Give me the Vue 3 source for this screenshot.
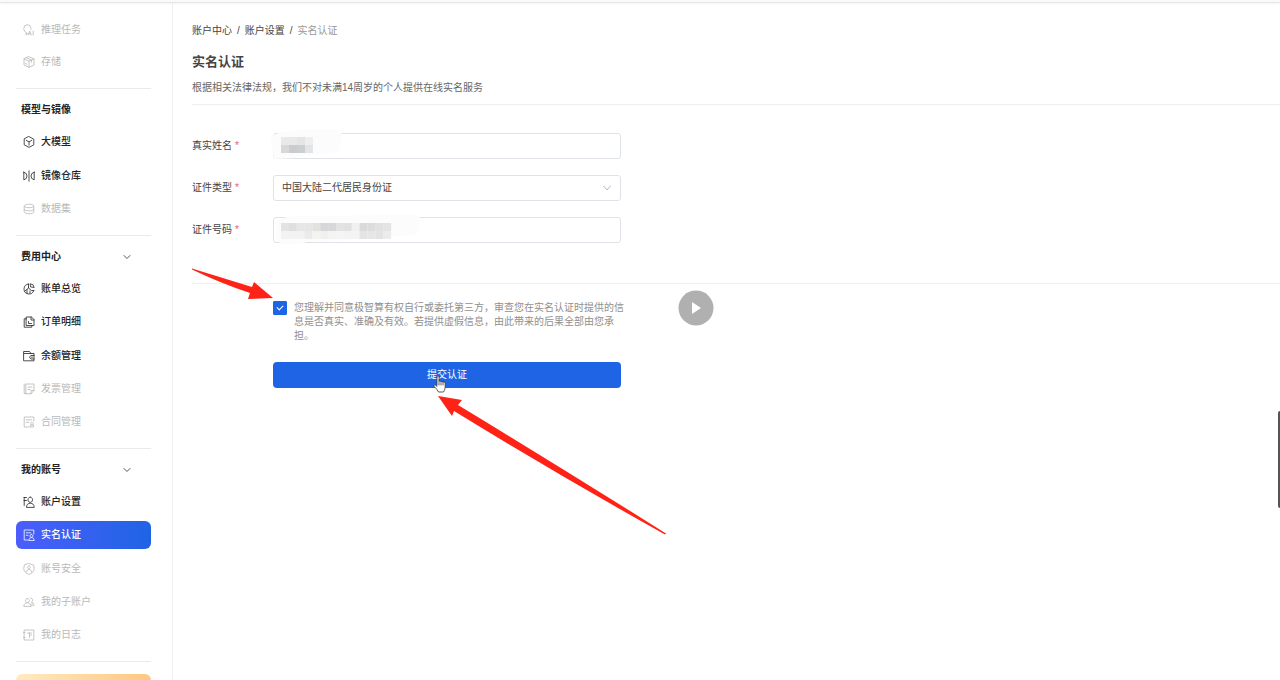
<script setup>
import { ref } from 'vue'

const icons = {
  infer: ['M4 9.200C1.600 8 .8 6.200 .8 4.600A3.500 3.700 0 0 1 7.900 4.400V5.300M3 9.200V11L4.400 9.700', 'M5.200 11L6.700 7L8.200 11M5.700 9.700H7.700M10.200 7V11'],
  store: ['M6 .7L11 3V9L6 11.300L1 9V3ZM1 3L6 5.200L11 3M6 5.200V11.300', 'M3.500 1.900L8.500 4.100V6.200M2.500 7.500L4 8.200'],
  cube: ['M6 .6L10.800 3.200V8.800L6 11.400L1.200 8.800V3.200ZM3.200 4.300L6 5.900L8.800 4.300M6 5.900V9.200'],
  mirror: ['M6 .8V11.200M.8 2.200V9.800Q4 9.200 4 6T.8 2.200ZM11.200 2.200V9.800Q8 9.200 8 6T11.200 2.200Z'],
  data: ['M1.200 3C1.200 .6 10.800 .6 10.800 3V9C10.800 11.400 1.200 11.400 1.200 9ZM1.200 3.500C2 5.200 10 5.200 10.800 3.500M1.200 6.500C2 8.500 10 8.500 10.800 6.500'],
  bill: ['M5.500 1A5 5 0 1 0 10.800 7.500M5.500 1V5L2 8M5.500 5L8.500 7.500H10.800', 'M7.500 .8A4 4 0 0 1 11.200 4.500L8 4ZM4 6.800V10.500M7 8V10'],
  order: ['M3.500 1H8.500L11 3.500V9.500H3.500ZM8 1V4H11M3.500 2.800H1.200V11.200H8.800V9.500M5.500 5.500V7.500H8.500'],
  wallet: ['M1 1.500H6.500L8 3.500H11V10.800H1ZM1 3.500H8', 'M11 5.500H7.800L6.500 7.200L7.800 9H11M8.500 7.200H9.500'],
  invoice: ['M3.200 1H11V7.500L8 10.800H3.200ZM1.200 1V10.500H3.200M5 4H9M5 6.500H7M8 10.800V7.500H11'],
  contract: ['M10.800 5V1H1.200V11H6M3.200 3.800H8.500M3.200 6.300H6', 'M9 6.200A1.300 1.300 0 1 1 8.900 6.200M8 9H10.500V11H7.500Z'],
  account: ['M3.500 1.500H1M3.500 4.500H1M1.200 1.500V9.500', 'M7.300 1A2.300 2.700 0 1 1 7.200 1M3.500 11C3.500 8.500 5 7.300 7.300 7.300S11.200 8.500 11.200 11Z'],
  verify: ['M10.800 5V1H1.200V11H5.500M3.200 3.800H7.500M3.200 6.300H5', 'M8.500 5.300A1.500 1.500 0 1 1 8.400 5.300M6 11.200C6 9.200 7.500 8.600 8.500 8.600S11.200 9.200 11.200 11.200Z'],
  safe: ['M6 .7L10.500 2L11.300 5.500C11 8.500 9 10.500 6 11.400C3 10.500 1 8.500 .7 5.500L1.500 2Z', 'M6 3A1.400 1.400 0 1 1 5.900 3M3.400 9C3.700 7.200 4.800 6.500 6 6.500S8.300 7.200 8.600 9'],
  users: ['M4.500 2.500A2 2 0 1 1 4.400 2.500M.8 10C1 7.600 2.500 6.800 4.500 6.800S7.800 7.700 8 10Z', 'M7.500 2A2 2 0 0 1 8.500 5.800C10 6.500 10.800 7.800 11 9.800M9 7V10'],
  log: ['M1.500 1H10.800V11H1.500ZM.5 3.500H2M.5 8.500H2M4.500 4H8.500M6.500 4V8.500M7.500 6H8.500'],
}

const sections = [
  { items: [{ t: '推理任务', i: 'infer', off: true }, { t: '存储', i: 'store', off: true }] },
  {
    title: '模型与镜像',
    items: [{ t: '大模型', i: 'cube' }, { t: '镜像仓库', i: 'mirror' }, { t: '数据集', i: 'data', off: true }],
  },
  {
    title: '费用中心',
    fold: true,
    items: [
      { t: '账单总览', i: 'bill' },
      { t: '订单明细', i: 'order' },
      { t: '余额管理', i: 'wallet' },
      { t: '发票管理', i: 'invoice', off: true },
      { t: '合同管理', i: 'contract', off: true },
    ],
  },
  {
    title: '我的账号',
    fold: true,
    items: [
      { t: '账户设置', i: 'account' },
      { t: '实名认证', i: 'verify', on: true },
      { t: '账号安全', i: 'safe', off: true },
      { t: '我的子账户', i: 'users', off: true },
      { t: '我的日志', i: 'log', off: true },
    ],
  },
]

const realName = ref('')
const idType = ref('中国大陆二代居民身份证')
const idNumber = ref('')
const agreed = ref(true)

const nameMosaic = ['#e9e9e9', '#e9e9e9', '#e5e5e5', '#eceeef', '#d8d8d8', '#cbcbcb', '#cccfd0', '#e3e4e6']
const numberMosaic = [
  '#e3e3e3', '#dfdfdf', '#e6e6e6', '#e6e6e6', '#e1e3df', '#d6d7d9', '#d8d8d8', '#e3e3e3', '#e1e1e1', '#f0f0f0', '#dadada', '#dcdcdc', '#e1e1df', '#e4e4e4',
  '#f3f3f3', '#f2f2f0', '#f2f2f2', '#ebebeb', '#f3f3f3', '#f0f1ef', '#f4f4f4', '#f5f5f3', '#f3f3f3', '#f4f4f4', '#e4e4e4', '#e6e6e6', '#e3e3e3', '#ececec',
]
</script>

<template>
  <div class="page">
    <header class="topbar"></header>
    <div class="body">
      <nav class="sidebar">
        <section v-for="(s, n) in sections" :key="n" class="group" :class="'rows-' + s.items.length">
          <h2 v-if="s.title" class="group-title">
            {{ s.title }}
            <svg v-if="s.fold" class="fold" viewBox="0 0 8 8"><path d="M1 2.500L4 5.500L7 2.500" /></svg>
          </h2>
          <ul class="menu">
            <li v-for="m in s.items" :key="m.t">
              <a href="#" class="item" :class="{ off: m.off, on: m.on }">
                <svg class="icon" viewBox="0 0 12 12"><path v-for="d in icons[m.i]" :key="d" :d="d" /></svg>
                {{ m.t }}
              </a>
            </li>
          </ul>
        </section>
        <div class="promo"></div>
      </nav>

      <main class="main">
        <div class="crumbs">
          <a href="#">账户中心</a><span>/</span><a href="#">账户设置</a><span>/</span><span class="here">实名认证</span>
        </div>
        <h1>实名认证</h1>
        <p class="note">根据相关法律法规，我们不对未满14周岁的个人提供在线实名服务</p>

        <form class="form" @submit.prevent>
          <div class="fields">
            <div class="field">
              <label for="name">真实姓名<i>*</i></label>
              <div class="control">
                <input id="name" v-model="realName" type="text" class="box" />
                <svg class="mask" viewBox="0 0 160 36">
                  <path class="smear" d="M1 8L12 3L30 1L64 0Q74 1 73 7L70 23L62 25Q34 25 26 29L5 30Z" />
                  <rect v-for="(c, k) in nameMosaic" :key="k" :x="12 + (k % 4) * 8" :y="k < 4 ? 8 : 16" width="8" height="8" :fill="c" />
                </svg>
              </div>
            </div>
            <div class="field">
              <label for="type">证件类型<i>*</i></label>
              <div class="control">
                <select id="type" v-model="idType" class="box">
                  <option>中国大陆二代居民身份证</option>
                </select>
                <svg class="caret" viewBox="0 0 8 8"><path d="M.5 2L4 6L7.500 2" /></svg>
              </div>
            </div>
            <div class="field">
              <label for="number">证件号码<i>*</i></label>
              <div class="control">
                <input id="number" v-model="idNumber" type="text" class="box" />
                <svg class="mask" viewBox="0 0 160 36">
                  <path class="smear" d="M8 7L22 3L144 2Q153 3 151 8L148 21L122 24Q70 28 38 29L30 31L12 31L7 26Z" />
                  <rect v-for="(c, k) in numberMosaic" :key="k" :x="12 + ((k % 14) * 110) / 14" :y="k < 14 ? 10 : 18" width="8" height="8" :fill="c" />
                </svg>
              </div>
            </div>
          </div>

          <div class="confirm">
            <div class="agree">
              <input id="agree" v-model="agreed" type="checkbox" />
              <label for="agree">您理解并同意极智算有权自行或委托第三方，审查您在实名认证时提供的信息是否真实、准确及有效。若提供虚假信息，由此带来的后果全部由您承担。</label>
            </div>
            <button type="submit" class="submit">提交认证</button>
          </div>
        </form>
      </main>
    </div>

    <button class="play" type="button" aria-label="播放">
      <svg viewBox="0 0 36 36"><circle cx="18" cy="18" r="17.500" /><path d="M14 12L23 18L14 24Z" /></svg>
    </button>
    <svg class="arrows" viewBox="0 0 480 270">
      <path d="M0 .5L60 19L62 14L81 30L56 31L58 25Q28 15 0 1.500Z" />
      <path d="M246 128L270 132L266 137Q370 200 474 265.500L473 266.500Q368 208 262 143L260 148Z" />
    </svg>
    <svg class="hand" viewBox="0 0 14 18">
      <path d="M4 10V2Q4 .8 5 .8T6 2V6Q7 5.300 8 6.500Q9 5.800 10 7Q12 6.500 12.200 8V12Q12 15 10.500 17H5.500Q4 14 1.200 11.500Q.6 10.300 1.600 9.800Q2.800 9.500 4 11.500M6 6V10M8 6.500V10M10 7V10" />
    </svg>
    <div class="handle"></div>
  </div>
</template>

<style>
body {
  margin: 0;
}
</style>

<style scoped>
.page {
  position: relative;
  display: flex;
  flex-direction: column;
  height: 100vh;
  overflow: hidden;
  background: #fff;
  color: #444;
  font: 10px/14px "Liberation Sans", "Noto Sans CJK SC", sans-serif;
}
* {
  box-sizing: border-box;
}
a {
  color: inherit;
  text-decoration: none;
}
svg {
  fill: none;
  stroke-linecap: round;
  stroke-linejoin: round;
}
.topbar {
  flex: none;
  height: 2px;
  background: #fafafa;
  box-shadow: 0 1px 2px #ddd;
  z-index: 1;
}
.body {
  flex: 1;
  display: flex;
  min-height: 0;
}
.sidebar {
  flex: none;
  width: 173px;
  padding: 0 21px 0 16px;
  border-right: 1px solid #f0f0f0;
  overflow: hidden;
}
.group {
  display: flex;
  flex-direction: column;
  padding-bottom: 12px;
  border-bottom: 1px solid #ebebeb;
}
.rows-2 {
  min-height: 87px;
  padding-top: 14px;
}
.rows-3 {
  min-height: 147px;
}
.rows-5 {
  min-height: 213px;
}
.group-title {
  display: flex;
  align-items: center;
  justify-content: space-between;
  height: 39px;
  margin: 0;
  padding: 3px 20px 0 5px;
  color: #222;
  font-size: 10px;
  font-weight: 700;
}
.fold {
  width: 8px;
  height: 8px;
  stroke: #555;
}
.menu {
  flex: 1;
  display: flex;
  flex-direction: column;
  justify-content: space-between;
  margin: 0;
  padding: 0;
  list-style: none;
}
.item {
  display: flex;
  align-items: center;
  gap: 6px;
  height: 28px;
  padding-left: 7px;
  border-radius: 6px;
  color: #222;
  font-weight: 500;
}
.icon {
  width: 12px;
  height: 12px;
  stroke: currentColor;
  stroke-width: 0.8;
}
.off {
  color: #b8b8b8;
  font-weight: 400;
}
.on {
  background: linear-gradient(90deg, #4c5dfb, #1f64e4);
  color: #fff;
}
.promo {
  height: 60px;
  margin-top: 12px;
  border-radius: 6px;
  background: linear-gradient(90deg, #feebc0, #ffc780);
}
.main {
  flex: 1;
  padding: 22px 0 0 19px;
}
.crumbs {
  display: flex;
  gap: 5px;
}
.crumbs .here {
  color: #999;
}
h1 {
  margin: 15px 0 0;
  font-size: 13px;
  line-height: 18px;
}
.note {
  margin: 0;
  padding: 10px 0 9px;
  border-bottom: 1px solid #eee;
  color: #666;
}
.fields {
  display: grid;
  gap: 16px;
  padding: 28px 0 40px;
  border-bottom: 1px solid #eee;
}
.field {
  display: flex;
}
.field > label {
  width: 81px;
  padding-top: 6px;
}
.field i {
  margin-left: 3px;
  color: #f05b5b;
  font-style: normal;
}
.control {
  position: relative;
  width: 348px;
}
.box {
  display: block;
  width: 100%;
  height: 26px;
  padding: 0 8px;
  border: 1px solid #dfe2e6;
  border-radius: 3px;
  background: #fff;
  color: #444;
  font: inherit;
  appearance: none;
  outline: none;
}
.caret {
  position: absolute;
  right: 10px;
  top: 9px;
  width: 8px;
  height: 8px;
  stroke: #b5b8be;
  pointer-events: none;
}
.mask {
  position: absolute;
  left: -4px;
  top: -4px;
  width: 160px;
  height: 36px;
  pointer-events: none;
}
.smear {
  fill: #fcfcfc;
}
.confirm {
  width: 433px;
  padding: 17px 0 0 81px;
}
.agree {
  display: flex;
  gap: 7px;
  color: #909090;
}
.agree input {
  flex: none;
  display: grid;
  place-items: center;
  width: 14px;
  height: 14px;
  margin: 0;
  border: 1px solid #1f64e4;
  border-radius: 1px;
  appearance: none;
}
.agree input:checked {
  background: #1f64e4;
}
.agree input:checked::after {
  content: "";
  width: 5px;
  height: 3px;
  margin-bottom: 2px;
  border: solid #fff;
  border-width: 0 0 1px 1px;
  transform: rotate(-45deg);
}
.submit {
  display: block;
  width: 348px;
  height: 26px;
  margin-top: 19px;
  padding: 0;
  border: 0;
  border-radius: 4px;
  background: #1f64e4;
  color: #fff;
  font: inherit;
}
.play {
  position: absolute;
  left: 678px;
  top: 290px;
  width: 36px;
  height: 36px;
  padding: 0;
  border: 0;
  background: none;
}
.play svg {
  display: block;
}
.play circle {
  fill: #b0b0b0;
}
.play path {
  fill: #fff;
}
.arrows {
  position: absolute;
  left: 192px;
  top: 268px;
  width: 480px;
  height: 270px;
  fill: #ff2216;
  pointer-events: none;
}
.hand {
  position: absolute;
  left: 433px;
  top: 375px;
  width: 14px;
  height: 18px;
  fill: #fff;
  stroke: #333;
  stroke-width: 0.8;
  pointer-events: none;
}
.handle {
  position: absolute;
  right: 0;
  top: 411px;
  width: 2px;
  height: 97px;
  border-radius: 2px 0 0 2px;
  background: #555;
}
</style>
